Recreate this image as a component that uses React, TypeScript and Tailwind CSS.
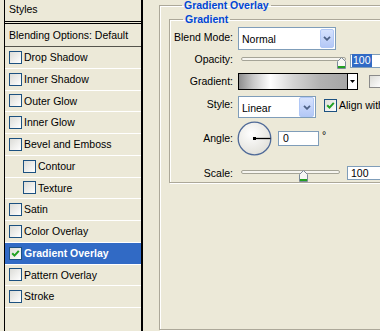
import React from "react";

const layerStyles = [
  { label: "Drop Shadow" },
  { label: "Inner Shadow" },
  { label: "Outer Glow" },
  { label: "Inner Glow" },
  { label: "Bevel and Emboss" },
  { label: "Contour", indent: true },
  { label: "Texture", indent: true },
  { label: "Satin" },
  { label: "Color Overlay" },
  { label: "Gradient Overlay", checked: true, active: true },
  { label: "Pattern Overlay" },
  { label: "Stroke" },
];

const CheckBox = ({ checked = false, gray = false }: { checked?: boolean; gray?: boolean }) => (
  <div
    className={`w-[13px] h-[13px] shrink-0 border flex items-center justify-center bg-linear-to-br from-[#DCDCD7] to-white ${
      gray ? "border-[#8A8A8A]" : "border-[#1C5180]"
    }`}
  >
    {checked && (
      <svg width="9" height="9" viewBox="0 0 9 9">
        <path d="M1.2 4.2 L3.5 6.6 L7.8 1.8" fill="none" stroke="#21A121" strokeWidth="2" />
      </svg>
    )}
  </div>
);

const DropButton = ({ className }: { className: string }) => (
  <div
    className={`ml-auto flex items-center justify-center rounded-[2px] border border-[#B1C8F6] bg-linear-to-b from-[#D6E2FD] to-[#B4C8F6] ${className}`}
  >
    <svg width="8" height="5" viewBox="0 0 8 5">
      <path d="M1 0.8 L4 3.8 L7 0.8" fill="none" stroke="#4D6185" strokeWidth="1.8" />
    </svg>
  </div>
);

const Thumb = () => (
  <svg width="9" height="12" viewBox="0 0 9 12">
    <path d="M0.5 4.5 L4.5 0.5 L8.5 4.5 L8.5 11.5 L0.5 11.5 Z" fill="#F7F7F4" stroke="#7C8A99" />
    <rect x="1" y="9" width="7" height="2" fill="#21A121" />
  </svg>
);

const Slider = ({ width, thumbLeft }: { width: number; thumbLeft: number }) => (
  <div className="relative h-[12px] shrink-0" style={{ width: width + 3 }}>
    <div
      className="ml-[3px] mt-[5px] h-[4px] rounded-full border border-[#A5A497] bg-[#F6F5F0]"
      style={{ width }}
    />
    <div className="absolute top-0" style={{ left: thumbLeft }}>
      <Thumb />
    </div>
  </div>
);

const Label = ({ children, className = "" }: { children: React.ReactNode; className?: string }) => (
  <div className={`w-[63px] shrink-0 text-right ${className}`}>{children}</div>
);

export default function App() {
  return (
    <div className="w-[380px] h-[331px] overflow-hidden bg-[#ECE9D8] flex text-black text-[10.5px] leading-none font-['Liberation_Sans',Arial,sans-serif]">
      {/* styles list */}
      <div className="ml-[4px] w-[139px] h-full shrink-0 border-l border-r-2 border-black">
        <div className="h-[24px] pb-[2px] pl-[4px] flex items-center border-b-[3px] border-double border-black">
          Styles
        </div>
        <div className="h-[23px] pl-[4px] flex items-center border-b border-[#55544C]">
          Blending Options: Default
        </div>
        {layerStyles.map((s) => (
          <div
            key={s.label}
            className={`h-[21.75px] flex items-center gap-[2px] border-b border-white ${
              s.indent ? "pl-[18px]" : "pl-[4px]"
            } ${s.active ? "bg-[#316AC5] text-white font-bold" : ""}`}
          >
            <CheckBox checked={s.checked} />
            <span>{s.label}</span>
          </div>
        ))}
      </div>

      {/* options */}
      <div className="pl-[16px] shrink-0">
        <fieldset className="w-[260px] h-[330px] border border-[#ACA899] shadow-[inset_1px_1px_0_#fff,1px_1px_0_#fff] pt-[3px] pl-[9px]">
          <legend className="ml-[13px] px-[2px] leading-[11px] font-bold text-[#0046D5]">
            Gradient Overlay
          </legend>
          <fieldset className="w-[240px] border border-[#ACA899] shadow-[inset_1px_1px_0_#fff,1px_1px_0_#fff] pb-[2px]">
            <legend className="ml-[13px] px-[2px] leading-[11px] font-bold text-[#0046D5]">
              Gradient
            </legend>

            <div className="mt-[2px] h-[23px] flex items-center">
              <Label className="pb-[3px]">Blend Mode:</Label>
              <div className="ml-[5px] w-[98px] h-full flex items-center border border-[#7F9DB9] bg-white pl-[3px] pr-[1px]">
                <span className="pt-[2px]">Normal</span>
                <DropButton className="w-[14px] h-[19px]" />
              </div>
            </div>

            <div className="h-[21px] flex items-center">
              <Label className="pb-[2px]">Opacity:</Label>
              <div className="ml-[5px]">
                <Slider width={105} thumbLeft={99} />
              </div>
              <div className="ml-[4px] w-[40px] h-[14px] shrink-0 flex items-center border border-[#7F9DB9] bg-white pl-[1px]">
                <span className="bg-[#316AC5] text-white px-[1px] py-[1px]">100</span>
              </div>
            </div>

            <div className="mt-[2px] h-[17px] flex items-center">
              <Label>Gradient:</Label>
              <div className="ml-[5px] w-[120px] h-full flex border border-black">
                <div className="flex-1 bg-[linear-gradient(to_right,#8E8E8E_0%,#C9C9C9_13%,#FFFFFF_29%,#D4D4D4_50%,#B2B2B2_75%,#A6A6A6_100%)]" />
                <div className="w-[10px] border-l border-black bg-white flex items-center justify-center">
                  <svg width="5" height="3" viewBox="0 0 5 3">
                    <path d="M0 0 H5 L2.5 3 Z" fill="#000" />
                  </svg>
                </div>
              </div>
              <div className="ml-[11px]">
                <CheckBox gray />
              </div>
            </div>

            <div className="mt-[6px] h-[22px] flex items-center">
              <Label className="pb-[6px]">Style:</Label>
              <div className="ml-[5px] w-[78px] h-full shrink-0 flex items-center border border-[#7F9DB9] bg-white pl-[3px] pr-[1px]">
                <span className="pt-[2px]">Linear</span>
                <DropButton className="w-[15px] h-[20px]" />
              </div>
              <div className="ml-[8px] mb-[3px] flex items-center gap-[2px] whitespace-nowrap">
                <CheckBox checked />
                <span>Align with Layer</span>
              </div>
            </div>

            <div className="mt-[3px] h-[34px] flex items-center">
              <Label>Angle:</Label>
              <svg className="ml-[4px] shrink-0" width="35" height="35" viewBox="0 0 35 35">
                <defs>
                  <radialGradient id="dial" cx="40%" cy="35%" r="75%">
                    <stop offset="0" stopColor="#FFFFFF" />
                    <stop offset="1" stopColor="#DEDDD6" />
                  </radialGradient>
                </defs>
                <circle cx="17.5" cy="17.5" r="16.3" fill="url(#dial)" stroke="#4F6A98" strokeWidth="1.3" />
                <line x1="17.5" y1="17.5" x2="33.5" y2="17.5" stroke="#000" strokeWidth="1.3" />
                <rect x="16" y="16" width="3" height="3" fill="#000" />
              </svg>
              <div className="ml-[6px] w-[41px] h-[15px] shrink-0 flex items-center border border-[#7F9DB9] bg-white pl-[4px]">
                0
              </div>
              <span className="ml-[3px] mb-[6px]">°</span>
            </div>

            <div className="mt-[11px] h-[14px] flex items-center">
              <Label>Scale:</Label>
              <div className="ml-[5px]">
                <Slider width={99} thumbLeft={61} />
              </div>
              <div className="ml-[7px] w-[40px] h-[14px] shrink-0 flex items-center border border-[#7F9DB9] bg-white pl-[3px]">
                100
              </div>
            </div>
          </fieldset>
        </fieldset>
      </div>
    </div>
  );
}
